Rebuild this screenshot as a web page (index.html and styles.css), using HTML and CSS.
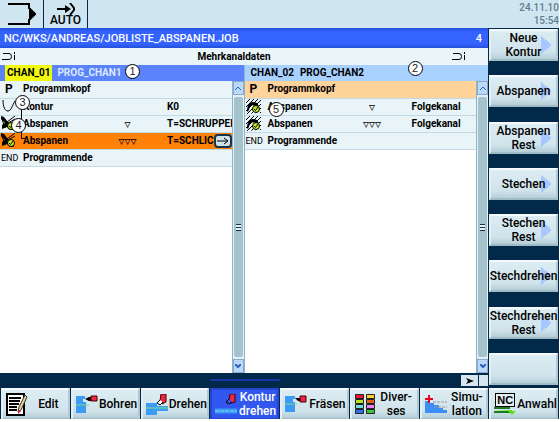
FILE: index.html
```
<!DOCTYPE html>
<html lang="de">
<head>
<meta charset="utf-8">
<title>Mehrkanaldaten</title>
<link rel="stylesheet" href="styles.css">
</head>
<body>
<svg class="defs" aria-hidden="true">
  <defs>
    <pattern id="hatch" width="4" height="4" patternUnits="userSpaceOnUse">
      <path d="M0 4L4 0" stroke="#000" stroke-width="1"/>
    </pattern>
    <symbol id="check" viewBox="0 0 8 8">
      <circle cx="4" cy="4" r="3.500" fill="#c8e61e" stroke="#000"/>
      <path d="M2 4l1.500 1.500L6 2" fill="none" stroke="#000"/>
    </symbol>
    <symbol id="cut-left" viewBox="0 0 15 15">
      <path d="M0 0L3 1L13 14H9L6 11L1 13V9L4 7L0 3z" fill="#000"/>
      <path d="M6 6L14 0M7 7l7-4M1 3l3 9" stroke="#000"/>
      <use href="#check" x="6" y="6" width="8" height="8"/>
    </symbol>
    <symbol id="cut-right" viewBox="0 0 15 15">
      <path d="M0 0H15V14H12L0 15z" fill="url(#hatch)"/>
      <path d="M1 12C1 7 3 3 7 3S12 5 13 8L9 7C7 6 5 6 4 8L2 13z" fill="#000"/>
      <use href="#check" x="6" y="6" width="8" height="8"/>
    </symbol>
    <symbol id="workpiece" viewBox="0 0 14 9">
      <path d="M1 1.500H7Q9.500 1.500 9.500 4.500T7 7.500H0M1.500 1v1M12.500 3v5M12.500 0v2" fill="none" stroke="#000"/>
    </symbol>
  </defs>
</svg>
<main class="screen">
  <header class="topbar">
    <div class="mode">
      <svg width="28" height="22" viewBox="0 0 28 22"><path d="M0 1H21V5L27 11L21 17V21H0" fill="none" stroke="#000" stroke-width="2"/><path d="M21 4L28 11L21 18z"/></svg>
    </div>
    <div class="mode auto">
      <svg width="18" height="12" viewBox="0 0 18 12"><path d="M0 6H12" stroke="#000" stroke-width="2"/><path d="M8 2L14 6L8 10z"/><path d="M13 0L17 5V7L13 12" fill="none" stroke="#000" stroke-width="2"/></svg>
      <span>AUTO</span>
    </div>
    <div class="clock"><time>24.11.10</time><time>15:54</time></div>
  </header>

  <section class="work">
    <div class="path"><span>NC/WKS/ANDREAS/JOBLISTE_ABSPANEN.JOB</span><span>4</span></div>
    <div class="caption">
      <svg width="14" height="9"><use href="#workpiece"/></svg>
      <h1>Mehrkanaldaten</h1>
      <svg width="14" height="9"><use href="#workpiece"/></svg>
    </div>
    <div class="channels">
      <section class="channel">
        <h2 class="name active"><span class="tag">CHAN_01</span><span>PROG_CHAN1</span></h2>
        <div class="pane">
          <div class="steps">
            <table>
              <tbody>
                <tr><td class="sym letter">P</td><td class="op">Programmkopf</td><td class="tri"></td><td class="val"></td></tr>
                <tr><td class="sym"><svg width="15" height="13" viewBox="0 0 15 13"><path d="M2 0C2 7 4 11 7 11S11 6 14 1" fill="none" stroke="#000"/></svg></td><td class="op">Kontur</td><td class="tri"></td><td class="val">K0</td></tr>
                <tr><td class="sym"><svg width="15" height="15"><use href="#cut-left"/></svg></td><td class="op">Abspanen</td><td class="tri">▿</td><td class="val">T=SCHRUPPER</td></tr>
                <tr class="current"><td class="sym"><svg width="15" height="15"><use href="#cut-left"/></svg></td><td class="op">Abspanen</td><td class="tri">▿▿▿</td><td class="val"><div class="more"><span>T=SCHLIC</span><button class="open" aria-label="Öffnen"><svg width="12" height="8" viewBox="0 0 12 8"><path d="M0 4H10M7 1L11 4L7 7" fill="none" stroke="#000"/></svg></button></div></td></tr>
                <tr><td class="sym end">END</td><td class="op">Programmende</td><td class="tri"></td><td class="val"></td></tr>
              </tbody>
            </table>
          </div>
          <div class="scroll">
            <button aria-label="Nach oben"><svg width="6" height="4" viewBox="0 0 6 4"><path d="M0 4L3 1L6 4" fill="none" stroke="#2b62b8"/></svg></button>
            <div class="track"><i class="grip"></i></div>
            <button aria-label="Nach unten"><svg width="6" height="4" viewBox="0 0 6 4"><path d="M0 0L3 3L6 0" fill="none" stroke="#2b62b8" stroke-width="2"/></svg></button>
          </div>
        </div>
        <svg class="link" width="4" height="30" viewBox="0 0 4 30"><path d="M.5 0V29.500H4" fill="none" stroke="#000"/></svg>
        <span class="note n1">1</span>
        <span class="note n3">3</span>
        <span class="note n4">4</span>
      </section>
      <section class="channel second">
        <h2 class="name"><span>CHAN_02</span><span>PROG_CHAN2</span></h2>
        <div class="pane">
          <div class="steps">
            <table>
              <tbody>
                <tr class="head"><td class="sym letter">P</td><td class="op">Programmkopf</td><td class="tri"></td><td class="val"></td></tr>
                <tr><td class="sym"><svg width="15" height="15"><use href="#cut-right"/></svg></td><td class="op">Abspanen</td><td class="tri">▿</td><td class="val">Folgekanal</td></tr>
                <tr><td class="sym"><svg width="15" height="15"><use href="#cut-right"/></svg></td><td class="op">Abspanen</td><td class="tri">▿▿▿</td><td class="val">Folgekanal</td></tr>
                <tr><td class="sym end">END</td><td class="op">Programmende</td><td class="tri"></td><td class="val"></td></tr>
              </tbody>
            </table>
          </div>
          <div class="scroll">
            <button aria-label="Nach oben"><svg width="6" height="4" viewBox="0 0 6 4"><path d="M0 4L3 1L6 4" fill="none" stroke="#2b62b8"/></svg></button>
            <div class="track"><i class="grip"></i></div>
            <button aria-label="Nach unten"><svg width="6" height="4" viewBox="0 0 6 4"><path d="M0 0L3 3L6 0" fill="none" stroke="#2b62b8" stroke-width="2"/></svg></button>
          </div>
        </div>
        <span class="note n2">2</span>
        <span class="note n5">5</span>
      </section>
    </div>
    <div class="strip">
      <i class="marker"></i>
      <button class="next" aria-label="Weiter"><svg width="8" height="6" viewBox="0 0 8 6"><path d="M0 0L8 3L0 6L2 3z"/></svg></button><i class="slot"></i>
    </div>
  </section>

  <nav class="side">
    <button class="key sub">Neue<br>Kontur</button>
    <button class="key sub">Abspanen</button>
    <button class="key sub">Abspanen<br>Rest</button>
    <button class="key sub">Stechen</button>
    <button class="key sub">Stechen<br>Rest</button>
    <button class="key sub">Stechdrehen</button>
    <button class="key sub">Stechdrehen<br>Rest</button>
    <button class="key" aria-label="Leer"></button>
  </nav>

  <nav class="bottom">
    <button class="key"><svg width="22" height="23" viewBox="0 0 22 23"><path d="M1 1H18V22H1z" fill="#fff" stroke="#000" stroke-width="2"/><path d="M3 5H15M3 8H14M3 11H13M3 14H11M3 17H11" stroke="#000" stroke-width="2"/><path d="M19 2L21 4L15 17L12 19L13 14z" fill="#e8cf8c" stroke="#333"/><path d="M12 17l3 1-3 3z" fill="#d4164a"/></svg><span>Edit</span></button>
    <button class="key"><svg width="22" height="18" viewBox="0 0 22 18"><path d="M0 1H9V4H7V7H10V18H0z" fill="#3c9bf5"/><path d="M0 10H13" stroke="#7bd88f"/><path d="M9 4L13 2H16V6H13z"/><path d="M15 1H21V6H15z" fill="#ee2448" stroke="#400"/></svg><span>Bohren</span></button>
    <button class="key"><svg width="22" height="21" viewBox="0 0 22 21"><path d="M0 9H11V12H22V17H11V21H0z" fill="#3c9bf5"/><path d="M0 14H22" stroke="#7bd88f"/><path d="M15 0H20V8L16 10L14 7z" fill="#ee2448" stroke="#400"/><path d="M14 6L11 9L14 11L17 8" fill="#fff" stroke="#000"/></svg><span>Drehen</span></button>
    <button class="key chosen"><svg width="22" height="21" viewBox="0 0 22 21"><path d="M0 17H22" stroke="#3c9bf5" stroke-width="5"/><path d="M0 17H22" stroke="#7fd8e8" stroke-dasharray="4 1"/><path d="M15 0H20V8L16 9L14 7z" fill="#ee2448" stroke="#400"/><path d="M14 5L11 8L14 10L17 8" fill="#2f55e0" stroke="#000"/></svg><span>Kontur<br>drehen</span></button>
    <button class="key"><svg width="22" height="18" viewBox="0 0 22 18"><path d="M0 1H10V4H8V7H10V17H0z" fill="#3c9bf5"/><path d="M0 9H12" stroke="#7bd88f"/><path d="M10 3H16V6H13z"/><path d="M15 1H21V7H15z" fill="#ee2448" stroke="#400"/></svg><span>Fräsen</span></button>
    <button class="key"><svg width="20" height="21" viewBox="0 0 20 21"><g stroke="#222"><path d="M.5 .5h8v4h-8z" fill="#ee1538"/><path d="M11.500 .5h8v4h-8z" fill="#ffd02e"/><path d="M.5 5.500h8v4h-8z" fill="#b4e61e"/><path d="M11.500 5.500h8v4h-8z" fill="#e0601c"/><path d="M.5 10.500h8v4h-8z" fill="#6fe0d8"/><path d="M11.500 10.500h8v4h-8z" fill="#e888ee"/><path d="M.5 15.500h8v4h-8z" fill="#2b72f0"/><path d="M11.500 15.500h8v4h-8z" fill="#36c83a"/></g></svg><span>Diver-<br>ses</span></button>
    <button class="key"><svg width="22" height="18" viewBox="0 0 22 18"><path d="M0 6V18H22V15H18V13H14V10H9V8H5V6z" fill="#3c8ff5"/><path d="M8 7H22M9 12H22" stroke="#999" stroke-dasharray="3 1"/><path d="M4 0V8M0 4H8" stroke="#e8001c" stroke-width="2"/></svg><span>Simu-<br>lation</span></button>
    <button class="key"><span class="nc"><b>NC</b><svg width="22" height="8" viewBox="0 0 22 8"><path d="M0 1H16M0 5H16" stroke="#1e7a1e" stroke-width="2"/><path d="M0 3H18V4H22L18 8L14 4H16" fill="#5ae01e"/></svg></span><span>Anwahl</span></button>
  </nav>
</main>
</body>
</html>
```
FILE: styles.css
```
* { box-sizing: border-box; }
body {
  margin: 0;
  background: #fff;
  color: #000;
  font: bold 10px/14px Roboto, "Liberation Sans", sans-serif;
}
h1, h2 { margin: 0; font: inherit; }
button { margin: 0; padding: 0; border: 0; color: inherit; font: inherit; }
svg { display: block; flex: none; }
.defs { position: absolute; width: 0; height: 0; }

.screen {
  display: grid;
  grid-template: 28px 1fr 31px / 1fr 71px;
  height: calc(100vh - 3px);
  margin-right: 1px;
  background: #02284a;
}

.topbar { grid-column: 1 / -1; display: flex; background: #cfe6f1; }
.mode {
  display: flex;
  flex-direction: column;
  align-items: center;
  justify-content: center;
  width: 44px;
  border-right: 1px solid #02284a;
}
.auto { font-size: 12px; line-height: 11px; font-weight: 500; }
.clock {
  display: flex;
  flex-direction: column;
  justify-content: center;
  align-items: flex-end;
  margin-left: auto;
  color: #607d90;
  font-size: 10px;
  line-height: 13px;
  font-weight: 500;
}

.work { display: flex; flex-direction: column; min-width: 0; }
.path {
  display: flex;
  justify-content: space-between;
  align-items: center;
  height: 20px;
  padding: 2px 6px 0 4px;
  background: linear-gradient(#2450d8, #3463ff 4px, #3463ff 16px, #2450d8);
  color: #fff;
  font-size: 11px;
  font-weight: 500;
}
.caption {
  display: flex;
  justify-content: space-between;
  align-items: center;
  height: 17px;
  padding: 0 22px 0 2px;
  background: #e9f5f8;
}
.channels { display: flex; flex: 1; min-height: 0; }
.channel { position: relative; display: flex; flex: 1; flex-direction: column; min-width: 0; }
.second { border-left: 1px solid #8fb4c8; }
.name {
  display: flex;
  align-items: center;
  gap: 6px;
  height: 16px;
  padding-left: 6px;
  background: #a9d1ff;
}
.active { gap: 5px; padding-left: 5px; background: #5b83fb; color: #dceaff; }
.tag { padding: 1px 2px; background: #f2fa10; color: #000; }

.pane { display: flex; flex: 1; min-height: 0; background: #fff; }
.steps { flex: 1; min-width: 0; overflow: hidden; }
table { width: 100%; border-collapse: collapse; table-layout: fixed; }
tr { height: 17px; background: #e9f4f8; }
td {
  height: 17px;
  padding: 0;
  border-bottom: 1px solid #c4dbe5;
  line-height: 16px;
  white-space: nowrap;
  vertical-align: middle;
}
.sym { width: 23px; padding-left: 1px; }
.letter { padding-left: 5px; font-size: 12px; }
.end { font-size: 9px; font-weight: normal; }
.op { width: 85px; }
.tri { width: 59px; padding-right: 20px; font: 12px/16px "DejaVu Sans", sans-serif; text-align: center; }
.head { background: #ffd399; }
.current { background: #ff8207; }
.more { display: flex; justify-content: space-between; align-items: center; }
.open {
  display: grid;
  place-items: center;
  width: 18px;
  height: 14px;
  border: 2px solid #17344a;
  border-radius: 4px;
  background: #cfe2ec;
}

.scroll {
  display: flex;
  flex-direction: column;
  width: 12px;
  border-left: 1px solid #8fb4c8;
  background: #e5f0f4;
}
.scroll button {
  display: grid;
  place-items: center;
  height: 14px;
  border: 1px solid #86a9d0;
  background: #bcd8fb;
}
.track {
  display: grid;
  flex: 1;
  place-items: center;
  margin: 2px 1px;
  border-radius: 2px;
  background: #a4c3cd;
}
.grip { width: 5px; height: 7px; background: repeating-linear-gradient(#17344a 0 1px, #e5f0f4 1px 3px); }

.note {
  position: absolute;
  width: 15px;
  height: 15px;
  border: 1px solid #000;
  border-radius: 50%;
  background: #fff;
  font: 11px/13px "Liberation Sans", sans-serif;
  text-align: center;
  color: #222;
}
.n1 { left: 125px; top: -1px; }
.n2 { left: 163px; top: -4px; }
.n3 { left: 15px; top: 30px; }
.n4 { left: 11px; top: 53px; }
.n5 { left: 24px; top: 37px; }
.link { position: absolute; left: 21px; top: 44px; }

.strip { display: flex; align-items: center; justify-content: flex-end; height: 15px; position: relative; }
.marker { position: absolute; left: 43%; width: 70px; top: 6px; height: 2px; background: #1737a8; }
.next { display: grid; place-items: center; width: 17px; height: 11px; margin-right: 1px; background: #d5e6ee; }
.slot { width: 9px; height: 11px; background: #d5e6ee; }

.key {
  display: flex;
  align-items: center;
  justify-content: center;
  min-width: 0;
  border: 2px solid;
  border-color: #f4fafc #b2cad3 #9fbcc6 #e3eff3;
  background: linear-gradient(#dcecf3, #d0e3eb 75%, #b5ced7);
  font-size: 12px;
  line-height: 14px;
  font-weight: 500;
  text-align: center;
}
.side { display: flex; flex-direction: column; justify-content: space-between; padding: 1px 1px 3px; }
.side .key { height: 32px; }
.sub {
  background: conic-gradient(from 230deg at 100% 50%, #a9c7ff 0 80deg, transparent 80deg) right 4px center / 11px 18px no-repeat,
    linear-gradient(#dcecf3, #d0e3eb 75%, #b5ced7);
}
.bottom { grid-column: 1 / -1; display: grid; grid-template-columns: repeat(8, minmax(0, 1fr)); gap: 1px; padding: 0 1px; }
.bottom .key { gap: 1px; padding-left: 3px; justify-content: flex-start; }
.bottom .key > span:last-child { flex: 1; }
.bottom .chosen { border-color: #2447d0; background: #3157ee; color: #fff; }
.nc { display: grid; justify-items: center; }
.nc b { padding: 0 1px; border: 1px solid #000; font: bold 11px/12px "Liberation Sans", sans-serif; background: #e3eff3; }
```
